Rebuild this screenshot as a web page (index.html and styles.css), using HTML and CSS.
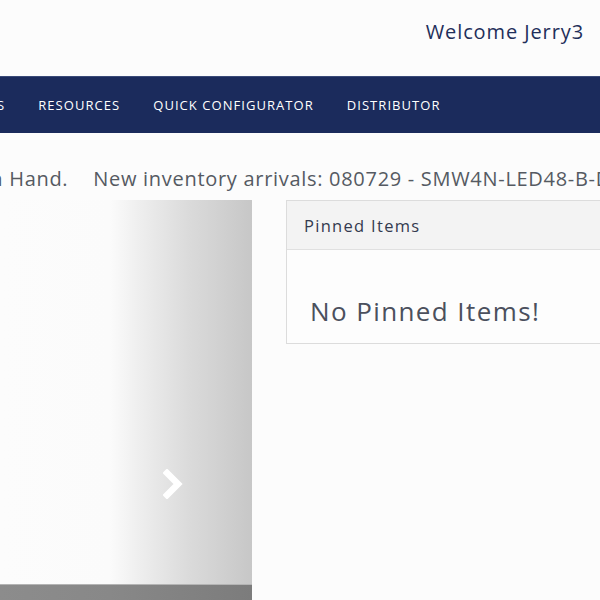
FILE: index.html
```html
<!DOCTYPE html>
<html>
<head>
<meta charset="utf-8">
<link rel="stylesheet" href="styles.css">
</head>
<body>
<header class="top">
  <span class="welcome">Welcome Jerry3</span>
</header>
<nav class="nav">
  <a class="nav-item first">PRODUCTS</a>
  <a class="nav-item">RESOURCES</a>
  <a class="nav-item">QUICK CONFIGURATOR</a>
  <a class="nav-item">DISTRIBUTOR</a>
</nav>
<div class="ticker">
  <span class="tick">Stock on Hand.</span>
  <span class="tick">New inventory arrivals: 080729 - SMW4N-LED48-B-DW</span>
</div>
<main class="main">
  <div class="carousel">
    <div class="slide"></div>
    <div class="slide-bar"></div>
    <span class="next">
      <svg width="22" height="30" viewBox="0 0 22 30"><path d="M4 4 L15 15 L4 26" fill="none" stroke="#fff" stroke-width="6.5" stroke-linecap="square" stroke-linejoin="miter"/></svg>
    </span>
  </div>
  <section class="card">
    <div class="card-head">Pinned Items</div>
    <div class="card-body">No Pinned Items!</div>
  </section>
</main>
</body>
</html>
```
FILE: styles.css
```css
html, body {
  margin: 0;
  padding: 0;
  background: #fcfcfc;
  overflow: hidden;
  width: 600px;
  height: 600px;
  font-family: "Open Sans", "Liberation Sans", sans-serif;
}
.top {
  height: 76px;
  display: flex;
  justify-content: flex-end;
  align-items: flex-start;
  padding-right: 16px;
  box-sizing: border-box;
}
.welcome {
  margin-top: 18px;
  font-size: 20px;
  line-height: 28px;
  color: #1f2f5a;
  letter-spacing: 0.9px;
}
.nav {
  height: 57px;
  background: #1b2b5c;
  display: flex;
  align-items: center;
  margin-left: -87px;
  border-top: 1px solid #3a4a78;
  box-sizing: border-box;
}
.nav-item {
  color: #fff;
  font-size: 13px;
  letter-spacing: 1.05px;
  padding: 0 16.5px;
  white-space: nowrap;
}
.ticker {
  height: 67px;
  display: flex;
  align-items: center;
  white-space: nowrap;
  padding-top: 24px;
  box-sizing: border-box;
  margin-left: -82px;
  gap: 25px;
}
.tick {
  font-size: 20px;
  color: #555a62;
  letter-spacing: 0.7px;
}
.main {
  display: flex;
  gap: 34px;
  align-items: flex-start;
}
.carousel {
  position: relative;
  width: 252px;
  height: 400px;
  flex: none;
  display: flex;
  flex-direction: column;
}
.slide {
  height: 384px;
  background: linear-gradient(to right, #fcfcfc 0, #fbfbfb 110px, #eeeeee 140px, #dadada 190px, #c7c7c7 252px);
}
.slide-bar {
  flex: 1;
  background: linear-gradient(to right, #8c8c8c 0, #888 110px, #7c7c7c 252px);
  border-top: 1px solid #b4b4b4;
}
.next {
  position: absolute;
  left: 163px;
  top: 269px;
  display: flex;
}
.card {
  width: 340px;
  flex: none;
  border: 1px solid #dcdcdc;
  background: #fdfdfd;
}
.card-head {
  height: 48px;
  background: #f3f3f3;
  border-bottom: 1px solid #e0e0e0;
  display: flex;
  align-items: center;
  padding-left: 17px;
  font-size: 16.5px;
  letter-spacing: 1.3px;
  color: #343a4f;
}
.card-body {
  height: 93px;
  padding-left: 23px;
  padding-top: 43px;
  box-sizing: border-box;
  font-size: 26px;
  color: #4b505d;
  letter-spacing: 1.4px;
}
```
